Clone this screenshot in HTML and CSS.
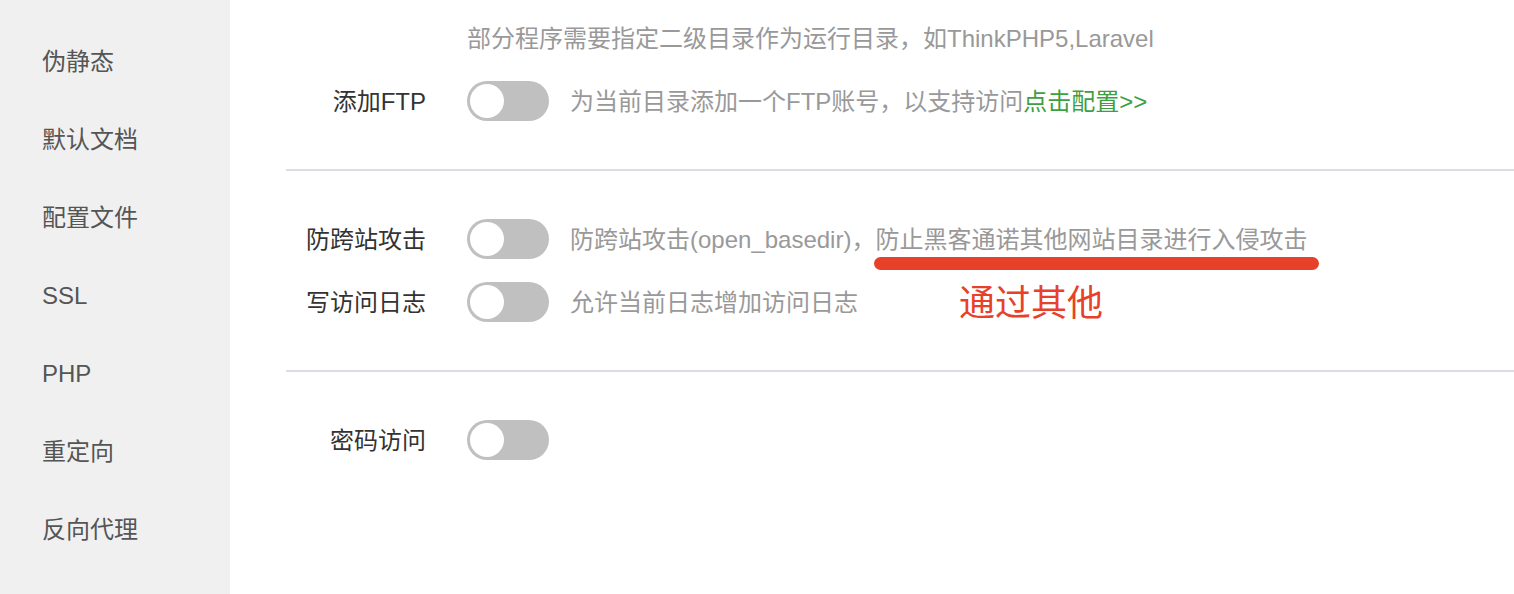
FILE: index.html
```html
<!DOCTYPE html>
<html lang="zh-CN">
<head>
  <meta charset="UTF-8">
  <meta name="viewport" content="width=device-width, initial-scale=1.0">
  <title>网站设置</title>
  <link rel="stylesheet" href="styles.css">
</head>
<body>
  <div class="page">
    <ul class="side">
      <li>伪静态</li>
      <li>默认文档</li>
      <li>配置文件</li>
      <li>SSL</li>
      <li>PHP</li>
      <li>重定向</li>
      <li>反向代理</li>
    </ul>
    <div class="main">
      <div class="section first">
        <div class="row">
          <span class="label"></span>
          <span class="tip wide">部分程序需要指定二级目录作为运行目录，如ThinkPHP5,Laravel</span>
        </div>
        <div class="row">
          <span class="label">添加FTP</span>
          <span class="switch"><i></i></span>
          <span class="tip">为当前目录添加一个FTP账号，以支持访问<a class="link">点击配置&gt;&gt;</a></span>
        </div>
      </div>
      <div class="section">
        <div class="row">
          <span class="label">防跨站攻击</span>
          <span class="switch"><i></i></span>
          <span class="tip">防跨站攻击(open_basedir)，防止黑客通诺其他网站目录进行入侵攻击</span>
        </div>
        <div class="row">
          <span class="label">写访问日志</span>
          <span class="switch"><i></i></span>
          <span class="tip">允许当前日志增加访问日志</span>
        </div>
      </div>
      <div class="section last">
        <div class="row">
          <span class="label">密码访问</span>
          <span class="switch"><i></i></span>
        </div>
      </div>
      <div class="mark-line"></div>
      <div class="mark-text">通过其他</div>
    </div>
  </div>
</body>
</html>
```

FILE: styles.css
```css
body { margin: 0; font-family: "Liberation Sans", "Noto Sans CJK SC", sans-serif; font-size: 24px; background: #fff; }
.page { display: flex; height: 594px; overflow: hidden; }
.side { width: 230px; flex: none; margin: 0; padding: 23px 0 0 0; list-style: none; background: #f0f0f0; color: #555; }
.side li { height: 78px; line-height: 78px; padding-left: 42px; }
.main { flex: 1; position: relative; padding-left: 56px; }
.section { padding: 48px 0 48px 0; border-bottom: 2px solid #dcdde3; display: flex; flex-direction: column; gap: 23px; }
.section.first { padding-top: 19px; gap: 22px; }
.section.last { border-bottom: none; }
.row { display: flex; align-items: center; height: 40px; }
.label { width: 140px; flex: none; text-align: right; color: #333; margin-right: 41px; padding-bottom: 3px; }
.switch { width: 82px; height: 40px; flex: none; box-sizing: border-box; padding: 3px; border-radius: 20px; background: #c0c0c0; margin-right: 21px; }
.switch i { display: block; width: 34px; height: 34px; border-radius: 50%; background: #fff; }
.tip { color: #999; white-space: nowrap; padding-bottom: 3px; }
.wide { padding-bottom: 6px; }
.link { color: #3d9f42; }
.mark-line { position: absolute; left: 644px; top: 257px; width: 445px; height: 13px; border-radius: 7px; background: #e8412a; }
.mark-text { position: absolute; left: 729px; top: 284px; font-size: 36px; line-height: 40px; color: #e8412a; }
```
